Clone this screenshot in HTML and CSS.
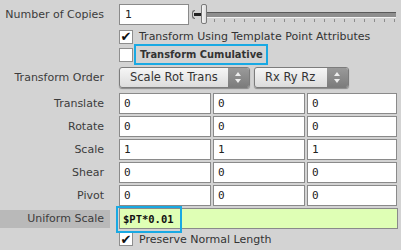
FILE: index.html
```html
<!DOCTYPE html>
<html lang="en">
<head>
  <meta charset="UTF-8">
  <title>Copy and Transform</title>
  <link rel="stylesheet" href="styles.css">
</head>
<body>
  <div class="panel">
    <!-- Number of copies -->
    <div class="row row-copies">
      <label class="label">Number of Copies</label>
      <div class="field-line">
        <input class="field copies" type="text" value="1">
        <div class="slider">
          <span class="slider-bracket"></span>
          <span class="slider-fill"></span>
          <span class="slider-handle"></span>
          <span class="slider-track"></span>
        </div>
      </div>
    </div>

    <div class="row row-check">
      <span class="label"></span>
      <div class="check-line">
        <span class="checkbox checked"></span>
        <span class="check-text">Transform Using Template Point Attributes</span>
      </div>
    </div>

    <div class="row row-check2">
      <span class="label"></span>
      <div class="check-line">
        <span class="checkbox"></span>
        <span class="check-text bold highlight">Transform Cumulative</span>
      </div>
    </div>

    <!-- Order menus -->
    <div class="row row-menu">
      <label class="label">Transform Order</label>
      <div class="menus">
        <div class="menu menu-wide">
          <span class="menu-text">Scale Rot Trans</span>
          <span class="menu-arrow"></span>
        </div>
        <div class="menu menu-narrow">
          <span class="menu-text">Rx Ry Rz</span>
          <span class="menu-arrow"></span>
        </div>
      </div>
    </div>

    <div class="row row-vec">
      <label class="label">Translate</label>
      <div class="vec"><input class="field" value="0"><input class="field" value="0"><input class="field" value="0"></div>
    </div>
    <div class="row row-vec">
      <label class="label">Rotate</label>
      <div class="vec"><input class="field" value="0"><input class="field" value="0"><input class="field" value="0"></div>
    </div>
    <div class="row row-vec">
      <label class="label">Scale</label>
      <div class="vec"><input class="field" value="1"><input class="field" value="1"><input class="field" value="1"></div>
    </div>
    <div class="row row-vec">
      <label class="label">Shear</label>
      <div class="vec"><input class="field" value="0"><input class="field" value="0"><input class="field" value="0"></div>
    </div>
    <div class="row row-vec">
      <label class="label">Pivot</label>
      <div class="vec"><input class="field" value="0"><input class="field" value="0"><input class="field" value="0"></div>
    </div>

    <!-- Expression driven parm -->
    <div class="row row-vec row-uniform">
      <label class="label label-active">Uniform Scale</label>
      <div class="field expr">
        <span class="expr-text">$PT*0.01</span>
      </div>
    </div>

    <div class="row row-check last">
      <span class="label"></span>
      <div class="check-line">
        <span class="checkbox checked"></span>
        <span class="check-text">Preserve Normal Length</span>
      </div>
    </div>
  </div>
</body>
</html>
```

FILE: styles.css
```css
body {
  margin: 0;
  background-color: #d3d3d3;
  font-family: 'DejaVu Sans', 'Liberation Sans', sans-serif;
  font-size: 11px;
  color: #333;
}
.panel {
  width: 401px;
  height: 250px;
  padding-top: 4px;
  box-sizing: border-box;
  display: flex;
  flex-direction: column;
}
.row {
  display: grid;
  grid-template-columns: 110px 1fr;
  column-gap: 9px;
  align-items: center;
  padding-right: 4px;
  box-sizing: border-box;
  flex: none;
}
.label {
  text-align: right;
  padding-right: 6px;
  color: #3c3c3c;
  white-space: nowrap;
}
.row-copies { height: 21px; }
.row-check { height: 19px; padding-top: 4px; }
.row-check2 { height: 21px; }
.row-menu { height: 27px; padding-top: 2px; align-items: start; }
.row-menu .label { line-height: 21px; }
.row-vec { height: 23px; }
.last { height: 20px; padding-top: 2px; align-items: start; }

.field {
  height: 21px;
  box-sizing: border-box;
  border: 1px solid #8a8a8a;
  background: #fff;
  font-family: 'DejaVu Sans Mono', 'Liberation Mono', monospace;
  font-size: 11px;
  color: #222;
  padding: 0 4px;
  margin: 0;
  outline: none;
  min-width: 0;
}

/* number of copies + slider */
.field-line {
  display: flex;
  align-items: center;
}
.copies {
  width: 70px;
  font-family: 'DejaVu Sans', sans-serif;
  padding-left: 5px;
}
.slider {
  position: relative;
  flex: 1;
  height: 21px;
  margin-left: 3px;
  background: repeating-linear-gradient(to right, #8c8c8c 0 1px, transparent 1px 10px) 12px 15px / 100% 3px no-repeat;
}
.slider-bracket {
  position: absolute;
  left: 0;
  top: 6px;
  width: 3px;
  height: 9px;
  border: 1px solid #666;
  border-right: none;
  border-radius: 3px 0 0 3px;
  box-sizing: border-box;
}
.slider-fill {
  position: absolute;
  left: 2px;
  top: 9px;
  width: 8px;
  height: 3px;
  background: #222;
}
.slider-track {
  position: absolute;
  left: 15px;
  right: 1px;
  top: 8px;
  height: 4px;
  background: #8e8e8e;
  border-top: 1px solid #5a5a5a;
  border-bottom: 1px solid #f2f2f2;
}
.slider-handle {
  position: absolute;
  left: 9px;
  top: 0;
  width: 6px;
  height: 20px;
  box-sizing: border-box;
  background: linear-gradient(to right, #f4f4f4, #dcdcdc);
  border: 1px solid #7a7a7a;
  border-radius: 2px;
  z-index: 1;
}

/* toggles */
.check-line {
  display: flex;
  align-items: center;
  gap: 6px;
}
.checkbox {
  width: 14px;
  height: 14px;
  box-sizing: border-box;
  background: #fff;
  border: 1px solid #8e8e8e;
  flex: none;
  display: flex;
  align-items: center;
  justify-content: center;
  overflow: hidden;
}
.checkbox.checked::after {
  content: "\2714";
  font-size: 13px;
  line-height: 12px;
  color: #111;
  margin-top: 1px;
}
.check-text {
  color: #333;
  white-space: nowrap;
}
.bold {
  font-family: 'DejaVu Sans Condensed', 'DejaVu Sans', sans-serif;
  font-weight: bold;
}
.highlight {
  border: 2px solid #19a9e3;
  padding: 2px 3px 2px 4px;
  margin-left: -5px;
}

/* menus */
.menus {
  display: flex;
  gap: 4px;
}
.menu {
  height: 21px;
  box-sizing: border-box;
  display: flex;
  border: 1px solid #7c7c7c;
  border-radius: 3px;
  background: linear-gradient(#f6f6f6, #dcdcdc);
  box-shadow: 0 1px 1px rgba(0, 0, 0, 0.35);
  overflow: hidden;
}
.menu-wide { width: 131px; }
.menu-narrow { width: 95px; }
.menu-text {
  flex: 1;
  padding-left: 10px;
  line-height: 19px;
  color: #333;
  font-size: 11.5px;
}
.menu-arrow {
  width: 21px;
  position: relative;
  background: linear-gradient(#9a9a9a, #7c7c7c);
}
.menu-arrow::before,
.menu-arrow::after {
  content: "";
  position: absolute;
  left: 7px;
  border-left: 3px solid transparent;
  border-right: 3px solid transparent;
}
.menu-arrow::before {
  top: 4px;
  border-bottom: 4px solid #eee;
}
.menu-arrow::after {
  top: 11px;
  border-top: 4px solid #eee;
}

/* vector parms */
.vec {
  display: grid;
  grid-template-columns: 92px 92px 1fr;
  gap: 2px;
}

.label-active {
  background: #b9b9b9;
  height: 18px;
  line-height: 18px;
}
.expr {
  position: relative;
  background: #dfffb5;
  width: 279px;
}
.expr-text {
  position: absolute;
  left: -4px;
  top: -3px;
  width: 66px;
  height: 27px;
  box-sizing: border-box;
  border: 2px solid #19a9e3;
  padding-left: 5px;
  line-height: 23px;
  font-weight: bold;
  font-size: 10.5px;
  color: #111;
}
```
